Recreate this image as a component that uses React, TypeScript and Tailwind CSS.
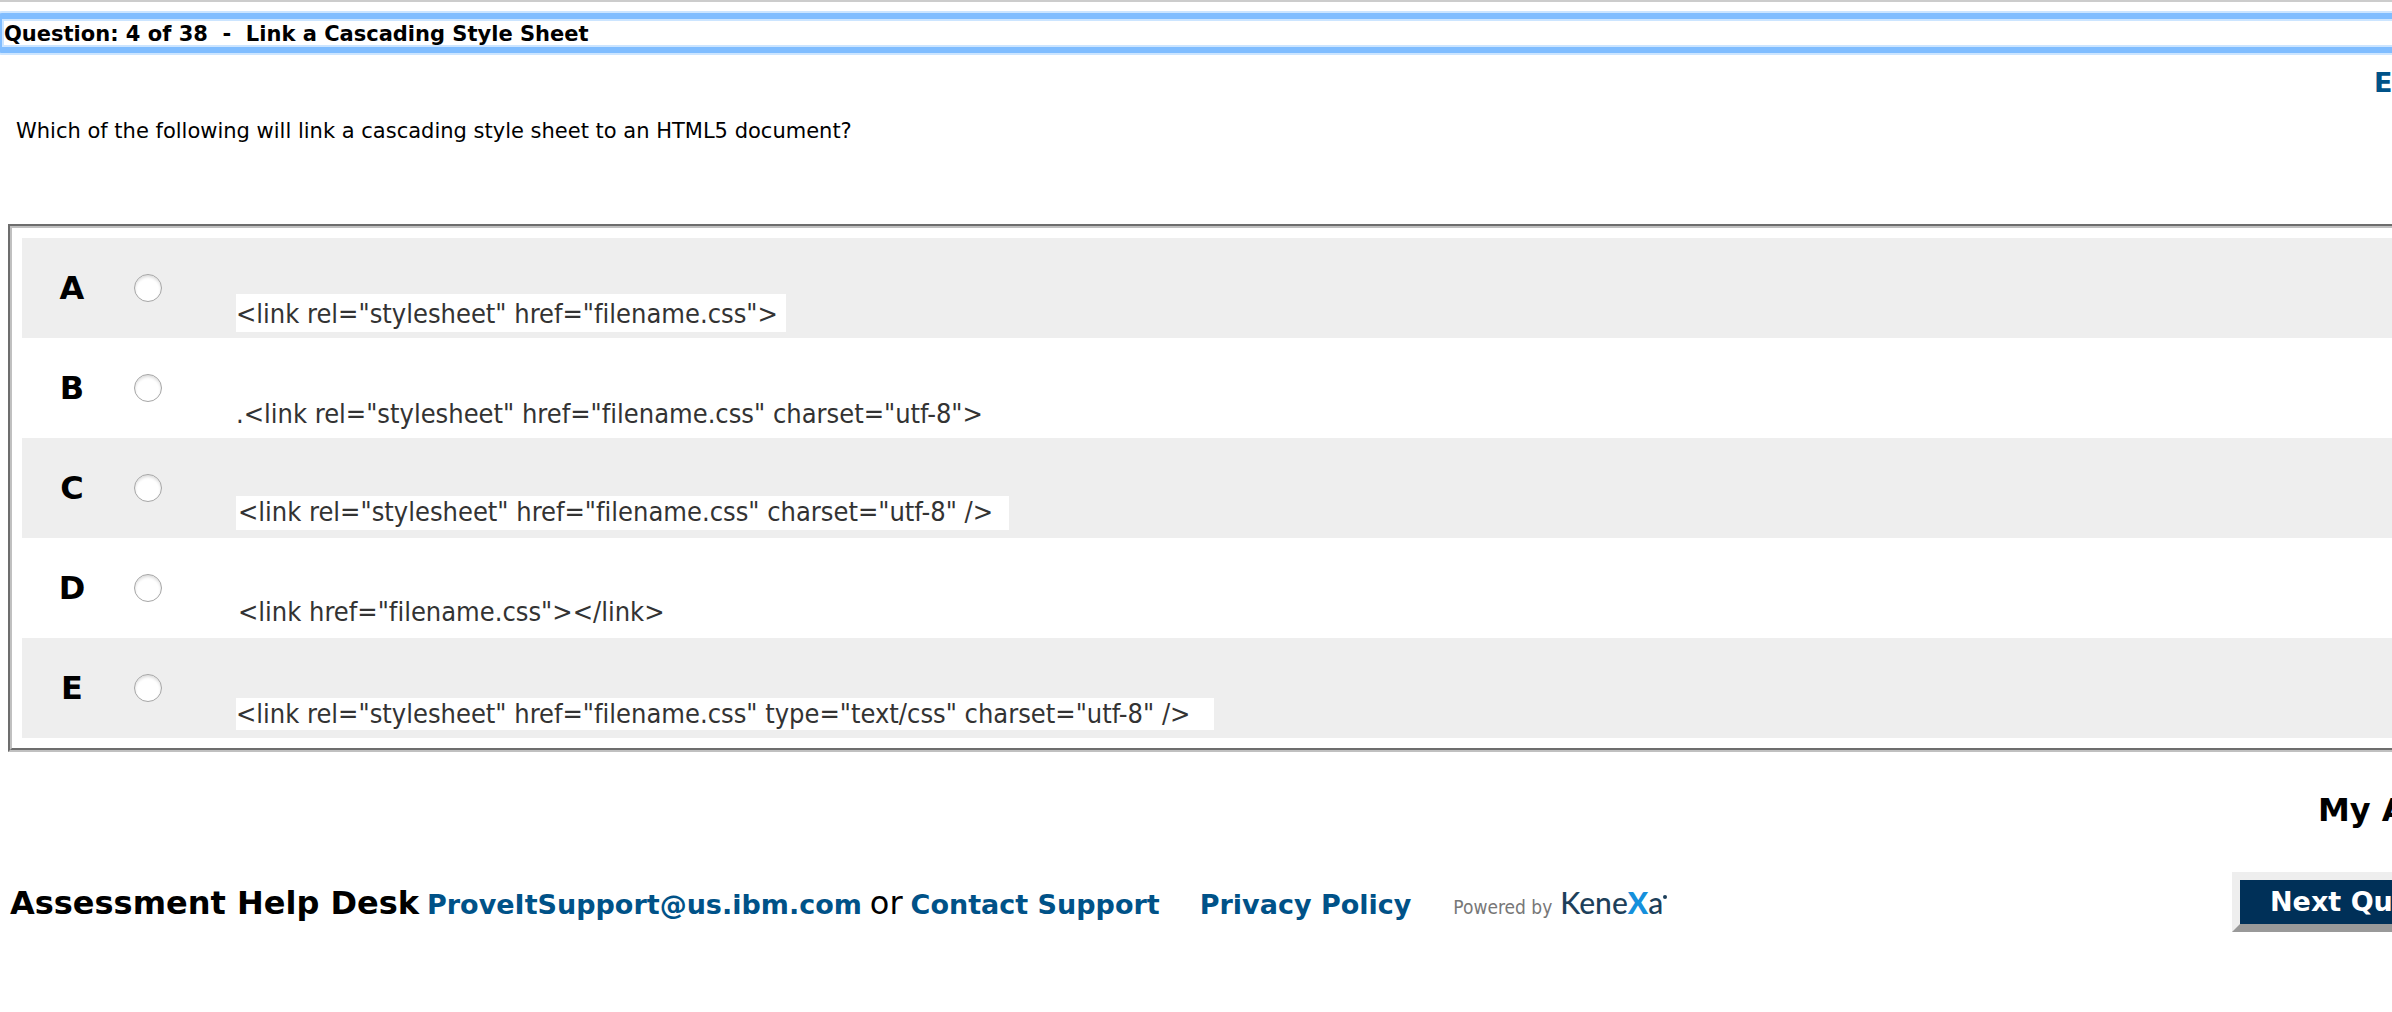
type Option = { letter: string; code: string; cell: string; chip: string };

const options: Option[] = [
  { letter: 'A', code: '<link rel="stylesheet" href="filename.css">', cell: 'pb-[6px]', chip: 'pt-1 pb-[2px] pr-2' },
  { letter: 'B', code: '.<link rel="stylesheet" href="filename.css" charset="utf-8">', cell: 'pb-[6px]', chip: 'pb-[2px]' },
  { letter: 'C', code: '<link rel="stylesheet" href="filename.css" charset="utf-8" />', cell: 'pb-2', chip: 'pb-[2px] pl-[2px] pr-4' },
  { letter: 'D', code: '<link href="filename.css"></link>', cell: 'pb-2', chip: 'pb-[2px] pl-[2px]' },
  { letter: 'E', code: '<link rel="stylesheet" href="filename.css" type="text/css" charset="utf-8" />', cell: 'pb-2', chip: 'pr-6' },
];

function QuestionHeader() {
  return (
    <h1 className="mt-[11px] -ml-1 -mr-3 rounded-md border-[6px] border-[#80bdff] px-[2px] pt-[2px] text-[21px] leading-[26px] font-bold whitespace-pre shadow-[0_0_0_2px_#cce5ff,inset_0_0_0_2px_#cce5ff]">
      {'Question: 4 of 38  -  Link a Cascading Style Sheet'}
    </h1>
  );
}

function OptionRow({ letter, code, cell, chip }: Option) {
  const id = `option-${letter}`;
  return (
    <tr className="h-[100px] odd:bg-[#eeeeee]">
      <th scope="row" className="w-[100px] text-center text-[32px] leading-10 font-bold">
        {letter}
      </th>
      <td className="w-[114px] pl-3 align-middle">
        <input
          id={id}
          type="radio"
          name="answer"
          className="block size-7 appearance-none rounded-full border border-[#a6a6a6] bg-white shadow-[inset_0_2px_3px_#dddddd] checked:bg-[#003058]"
        />
      </td>
      <td className={`align-bottom ${cell}`}>
        <label
          htmlFor={id}
          className={`block w-fit bg-white font-['DejaVu_Sans_Condensed','DejaVu_Sans',sans-serif] text-[27px] leading-8 whitespace-nowrap text-[#333333] [font-variant-ligatures:none] ${chip}`}
        >
          {code}
        </label>
      </td>
    </tr>
  );
}

function KenexaMark() {
  return (
    <div className="ml-[42px] flex items-baseline font-normal">
      <span className="mr-2 font-['DejaVu_Sans_Condensed','DejaVu_Sans',sans-serif] text-[19px] leading-8 text-[#777777]">
        Powered by
      </span>
      <span className="font-[Lato,sans-serif] text-[30px] leading-8 font-medium text-[#1d3f5a]">
        Kene<span className="font-black text-[#1590dc]">X</span>a
      </span>
      <span className="mb-6 size-1 self-end rounded-full bg-[#1d3f5a]" />
    </div>
  );
}

export default function App() {
  return (
    <main className="overflow-hidden border-t-2 border-[#cccccc] bg-white pb-20 font-['DejaVu_Sans',Verdana,sans-serif] text-black">
      <QuestionHeader />
      <nav className="mt-3 flex justify-end text-[27px] leading-9 font-bold">
        <a href="#e" className="w-[18px] whitespace-nowrap text-[#005288]">E</a>
      </nav>
      <p className="mt-[14px] ml-4 text-[21px] leading-8">
        Which of the following will link a cascading style sheet to an HTML5 document?
      </p>
      <section className="mt-[77px] -mr-4 ml-2 border-2 border-t-[#6d6d6d] border-b-[#c0c0c0] border-l-[#6d6d6d]">
        <div className="border-2 border-t-[#c0c0c0] border-b-[#6d6d6d] border-l-[#c0c0c0] p-[10px]">
          <table className="w-full border-collapse">
            <tbody>
              {options.map((o) => (
                <OptionRow key={o.letter} {...o} />
              ))}
            </tbody>
          </table>
        </div>
      </section>
      <div className="mt-[38px] flex justify-end text-[32px] leading-10 font-bold">
        <span className="w-[74px] whitespace-nowrap">My A</span>
      </div>
      <footer className="mt-[42px] -mr-4 flex items-center justify-between">
        <div className="ml-[10px] flex items-baseline pt-1 text-[27px] leading-10 font-bold whitespace-nowrap">
          <span className="text-[32px]">Assessment Help Desk</span>
          <a href="#mail" className="ml-2 text-[#005288]">ProveItSupport@us.ibm.com</a>
          <span className="mx-2 text-[32px] font-normal">or</span>
          <a href="#contact" className="text-[#005288]">Contact Support</a>
          <a href="#privacy" className="ml-10 text-[#005288]">Privacy Policy</a>
          <KenexaMark />
        </div>
        <button
          type="button"
          className="w-44 border-8 border-t-[#eeeeee] border-r-[#999999] border-b-[#999999] border-l-[#eeeeee] bg-[#003058] py-1 pl-[30px] text-left text-[27px] leading-9 font-bold whitespace-nowrap text-white"
        >
          Next Qu
        </button>
      </footer>
    </main>
  );
}
